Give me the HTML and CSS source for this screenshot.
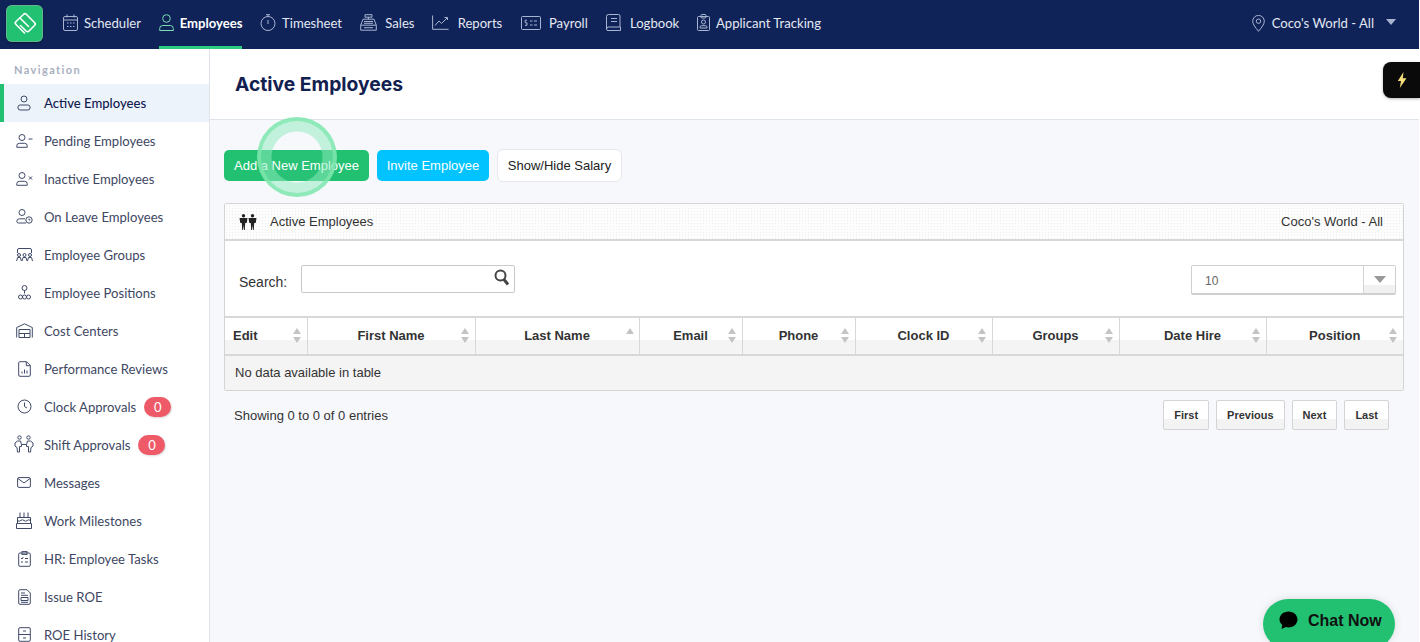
FILE: index.html
```html
<!DOCTYPE html>
<html lang="en">
<head>
<meta charset="utf-8">
<title>Active Employees</title>
<link rel="stylesheet" href="styles.css">
</head>
<body>
<div class="app">
<header class="topbar">
  <a class="logo"><svg viewBox="0 0 26 26" width="26" height="26" fill="none" stroke="#fff" stroke-width="1.6" stroke-linejoin="round" stroke-linecap="round"><path d="M12 3 4 10.500q-1.500 1.500 0 3L12.500 22"/><path d="M12 3q1-1 2 0l8.500 8.500q1.500 1.500 0 3L17 20q-1.500 1.500-3 0l-5.500-5.500"/><path d="M8 7l8.500 8.500"/></svg></a>
  <nav class="topnav">
    <a class="tn"><svg class="ti" width="15" height="17" viewBox="0 0 15 17"><rect x=".5" y="2.5" width="14" height="14" rx="1.5"/><path d="M.5 6h14M4 .5v3M11 .5v3M4 9h1.5M7 9h1.5M10 9h1.5M4 12.500h1.500M7 12.500h1.500M10 12.500h1.500"/></svg>Scheduler</a>
    <a class="tn on"><svg class="ti" width="15" height="17" viewBox="0 0 15 17"><circle cx="7.500" cy="4.500" r="3.800"/><path d="M.7 16.500v-2a3 3 0 0 1 3-3h7.600a3 3 0 0 1 3 3v2z"/></svg>Employees</a>
    <a class="tn"><svg class="ti" width="16" height="17" viewBox="0 0 16 17"><circle cx="8" cy="9.500" r="7"/><path d="M6 .7h4M8 .7v2M8 6v4"/></svg>Timesheet</a>
    <a class="tn wide"><svg class="ti" width="17" height="17" viewBox="0 0 17 17"><path d="M5 .7h7v2.500H5zM8.500 3.200v2M3 5.200h11l2.300 6H.7zM.7 11.200v5h15.600v-5"/><path d="M4 7.500h9M4 9.300h9M4 13.700h9"/></svg>Sales</a>
    <a class="tn wide"><svg class="ti" width="17" height="15" viewBox="0 0 17 15"><path d="M.6 .5v13.800h16"/><path d="M3 10.500 7 6l2.500 2.500L15 3M12.500 2.500H15.500V5"/></svg>Reports</a>
    <a class="tn pay"><svg class="ti" width="20" height="14" viewBox="0 0 20 14"><rect x=".5" y=".5" width="19" height="13" rx="1"/><path d="M9 5h2.500M13 5h3M9 9h2.500M13 9h3M6 4.200H4.200v2.600h1.800v2.500H4"/></svg>Payroll</a>
    <a class="tn wide log"><svg class="ti" width="15" height="17" viewBox="0 0 15 17"><path d="M2.500.5h10a1.500 1.500 0 0 1 1.500 1.500v11H2.500a2 2 0 0 0-2 2V2.500a2 2 0 0 1 2-2z"/><path d="M.5 15a1.500 1.500 0 0 0 1.500 1.500h12.500V13M5 4.500h6M5 7.500h6"/></svg>Logbook</a>
    <a class="tn"><svg class="ti" width="13" height="17" viewBox="0 0 13 17"><rect x=".5" y="2.500" width="12" height="14" rx="1"/><rect x="4" y=".5" width="5" height="3.500" rx="1"/><circle cx="6.500" cy="8" r="2"/><path d="M3 14v-.8a1.500 1.500 0 0 1 1.500-1.500h4a1.500 1.500 0 0 1 1.500 1.500v.8z"/></svg>Applicant Tracking</a>
  </nav>
  <a class="loc"><svg class="ti" width="13" height="17" viewBox="0 0 13 17"><path d="M6.500 16.300C3.500 12.500.7 9.500.7 6.200a5.800 5.800 0 0 1 11.600 0c0 3.300-2.800 6.300-5.800 10.100z"/><circle cx="6.500" cy="6.200" r="2.200"/></svg><span class="loc-text">Coco's World - All</span><span class="caret"></span></a>
</header>

<div class="body">
<aside class="side">
  <div class="side-title">Navigation</div>
  <a class="si on"><span class="sic"><svg class="ic" width="14" height="16" viewBox="0 0 14 16"><circle cx="7" cy="4" r="3"/><rect x="1" y="10" width="12" height="5" rx="2"/></svg></span>Active Employees</a>
  <a class="si"><span class="sic"><svg class="ic" width="17" height="14" viewBox="0 0 17 14"><circle cx="6" cy="3.500" r="3"/><path d="M.8 13.300v-1.500a2.500 2.500 0 0 1 2.500-2.500h5.400a2.500 2.500 0 0 1 2.500 2.500v1.500zM12.500 5h4"/></svg></span>Pending Employees</a>
  <a class="si"><span class="sic"><svg class="ic" width="17" height="14" viewBox="0 0 17 14"><circle cx="6" cy="3.500" r="3"/><path d="M.8 13.300v-1.500a2.500 2.500 0 0 1 2.500-2.500h5.400a2.500 2.500 0 0 1 2.500 2.500v1.500zM13 4.500l3 3M16 4.500l-3 3"/></svg></span>Inactive Employees</a>
  <a class="si"><span class="sic"><svg class="ic" width="17" height="15" viewBox="0 0 17 15"><circle cx="6" cy="3.500" r="3"/><path d="M10 14H2.500A1.700 1.700 0 0 1 .8 12.300v0a2.500 2.500 0 0 1 2.500-2.500H9"/><circle cx="13" cy="11" r="3.200"/><path d="M13 9.500V11h1.300"/></svg></span>On Leave Employees</a>
  <a class="si"><span class="sic"><svg class="ic" width="17" height="14" viewBox="0 0 17 14"><path d="M1.500 5V2a1.500 1.500 0 0 1 1.500-1.500h11A1.500 1.500 0 0 1 15.500 2v3"/><circle cx="3" cy="7" r="1.500"/><circle cx="8.500" cy="7" r="1.500"/><circle cx="14" cy="7" r="1.500"/><path d="M.6 13l1-3.500h2.800l1 3.500M6 13l1-3.500h3l1 3.500M11.500 13l1-3.500h3l1 3.500"/></svg></span>Employee Groups</a>
  <a class="si"><span class="sic"><svg class="ic" width="13" height="15" viewBox="0 0 13 15"><circle cx="6.500" cy="3" r="2.500"/><path d="M6.500 5.500v3"/><circle cx="2.500" cy="12" r="2"/><circle cx="6.500" cy="12" r="2"/><circle cx="10.500" cy="12" r="2"/></svg></span>Employee Positions</a>
  <a class="si"><span class="sic"><svg class="ic" width="17" height="15" viewBox="0 0 17 15"><path d="M.7 14.500V4.500L8.500.8l7.800 3.700v10"/><path d="M3 14.500V6.500h11v8zM3 10.500h11M8.500 10.500v4"/></svg></span>Cost Centers</a>
  <a class="si"><span class="sic"><svg class="ic" width="13" height="16" viewBox="0 0 13 16"><path d="M1.500.7H8.500L12.300 4.500V14a1.300 1.300 0 0 1-1.300 1.300H2A1.300 1.300 0 0 1 .7 14V2A1.300 1.300 0 0 1 1.500.7zM8.300.7v4h4M4 12.500v-2M6.500 12.500v-4M9 12.500v-3"/></svg></span>Performance Reviews</a>
  <a class="si"><span class="sic"><svg class="ic" width="15" height="15" viewBox="0 0 15 15"><circle cx="7.500" cy="7.500" r="6.500"/><path d="M7.500 3.500v4l2.500 1.500"/></svg></span>Clock Approvals<span class="badge">0</span></a>
  <a class="si"><span class="sic"><svg class="ic" width="20" height="19" viewBox="0 0 20 19"><circle cx="5.500" cy="2.500" r="1.700"/><circle cx="14.500" cy="2.500" r="1.700"/><path d="M3.500 6h3l1 3.500v2h-2V17H3.500l-.5-4.500L1 11V8zM16.500 6h-3l-1 3.500v2h2V17h2l.5-4.500L19 11V8zM7.500 9.500h5"/></svg></span>Shift Approvals<span class="badge">0</span></a>
  <a class="si"><span class="sic"><svg class="ic" width="14" height="11" viewBox="0 0 14 11"><rect x=".6" y=".6" width="12.800" height="9.800" rx="1.300"/><path d="M1 1.500 7 6l6-4.500"/></svg></span>Messages</a>
  <a class="si"><span class="sic"><svg class="ic" width="16" height="17" viewBox="0 0 16 17"><path d="M4 .5v5M8 .5v5M12 .5v5M1.500 5.500h13v6h-13zM.5 11.500h15v5H.5zM1.500 8.500q1.600 1.500 3.250 0t3.250 0 3.250 0 3.250 0"/></svg></span>Work Milestones</a>
  <a class="si"><span class="sic"><svg class="ic" width="13" height="16" viewBox="0 0 13 16"><rect x=".7" y="2" width="11.600" height="13.300" rx="1.200"/><rect x="4" y=".6" width="5" height="2.800"/><path d="M3 7l1 1 1.300-1.800M7 7.500h3M3 11h2M7 11h3"/></svg></span>HR: Employee Tasks</a>
  <a class="si"><span class="sic"><svg class="ic" width="13" height="16" viewBox="0 0 13 16"><path d="M1.800.7H9L12.300 4v10a1.300 1.300 0 0 1-1.300 1.300H2A1.300 1.300 0 0 1 .7 14V2A1.300 1.300 0 0 1 1.800.7zM3 4h4M3 6.300h7M3 8.500h7v3H3zM3 13.300h7"/></svg></span>Issue ROE</a>
  <a class="si"><span class="sic"><svg class="ic" width="13" height="15" viewBox="0 0 13 15"><rect x=".7" y=".7" width="11.600" height="13.600" rx="1.300"/><path d="M.7 7.500h11.600M5 4h3M5 11h3"/></svg></span>ROE History</a>
</aside>

<main class="main">
  <div class="titlebar"><h1>Active Employees</h1></div>
  <div class="content">
    <div class="actions">
      <button class="btn green">Add a New Employee</button>
      <button class="btn blue">Invite Employee</button>
      <button class="btn white">Show/Hide Salary</button>
    </div>
    <section class="panel">
      <div class="panel-head">
        <span class="ph-left"><svg width="18" height="16" viewBox="0 0 18 16" fill="#222"><circle cx="4.500" cy="1.800" r="1.700"/><circle cx="13.500" cy="1.800" r="1.700"/><path d="M.5 4h8l-.8 5H6.200l-.4 7H5l-.5-5-.5 5h-.8l-.4-7H1.300zM9.500 4h8l-.8 5h-1.500l-.4 7H14l-.5-5-.5 5h-.8l-.4-7h-1.500z"/></svg>Active Employees</span>
        <span>Coco's World - All</span>
      </div>
      <div class="filters">
        <label class="search">Search:<span class="search-box"><svg width="16" height="17" viewBox="0 0 16 17" fill="none" stroke="#444"><circle cx="6.500" cy="6.500" r="5" stroke-width="2"/><path d="M10 10.500l4 5" stroke-width="3"/></svg></span></label>
        <div class="select"><span class="sel-val">10</span><span class="sel-btn"><span class="sel-caret"></span></span></div>
      </div>
      <table class="grid">
        <colgroup><col class="c1"><col class="c2"><col class="c3"><col class="c4"><col class="c5"><col class="c6"><col class="c7"><col class="c8"><col class="c9"></colgroup>
        <thead><tr>
          <th class="left">Edit<i class="sort"></i></th>
          <th>First Name<i class="sort"></i></th>
          <th>Last Name<i class="sort asc"></i></th>
          <th>Email<i class="sort"></i></th>
          <th>Phone<i class="sort"></i></th>
          <th>Clock ID<i class="sort"></i></th>
          <th>Groups<i class="sort"></i></th>
          <th>Date Hire<i class="sort"></i></th>
          <th>Position<i class="sort"></i></th>
        </tr></thead>
        <tbody><tr><td colspan="9">No data available in table</td></tr></tbody>
      </table>
    </section>
    <div class="foot">
      <span>Showing 0 to 0 of 0 entries</span>
      <div class="pager"><a>First</a><a>Previous</a><a>Next</a><a>Last</a></div>
    </div>
  </div>
</main>
</div>
</div>
<div class="ripple"></div>
<div class="bolt"><svg width="10" height="16" viewBox="0 0 10 16"><path d="M6.500 0 .8 9h3.200L2.800 16 9.500 6.300H5.800z" fill="#f6dd7c"/></svg></div>
<a class="chat"><svg width="19" height="19" viewBox="0 0 19 19"><path d="M9.500 0.500c5 0 9 3.600 9 8s-4 8-9 8c-.9 0-1.800-.1-2.600-.4L2.500 18l.8-4C1.500 12.500.5 10.600.5 8.500c0-4.400 4-8 9-8z" fill="#000"/></svg>Chat Now</a>
</body>
</html>
```

FILE: styles.css
```css
* { box-sizing: border-box; }
html, body { margin: 0; height: 642px; overflow: hidden; background: #fff; }
body { font-family: "Liberation Sans", Arial, sans-serif; position: relative; }
a { text-decoration: none; color: inherit; }
.app { width: 1419px; height: 642px; display: flex; flex-direction: column; }

.topbar { height: 49px; background: #0f2359; display: flex; align-items: stretch; padding-left: 6px; font-family: Lato, sans-serif; flex: none; }
.logo { width: 37px; height: 37px; margin-top: 5px; border-radius: 6px; background: #22c172; display: flex; align-items: center; justify-content: center; box-shadow: 0 1px 2px rgba(0,0,0,.4), inset 0 0 0 1px rgba(150,175,165,.55); }
.topnav { display: flex; margin-left: 20px; gap: 17.700px; }
.tn { display: flex; align-items: center; gap: 6px; font-size: 13.100px; color: #e4e8f2; height: 49px; padding-bottom: 1px; border-bottom: 3px solid transparent; }
.tn.wide { gap: 8.500px; }
.tn.pay { gap: 8px; margin-left: 1px; }
.tn.log { margin-left: 1px; }
.tn.on { color: #fff; font-weight: 700; border-bottom-color: #2ecb7f; }
.ti { fill: none; stroke: #a9b4d0; stroke-width: 1; flex: none; }
.tn.on .ti { stroke: #7ddcb4; }
.loc { margin-left: auto; display: flex; align-items: center; color: #e4e8f2; font-size: 13.100px; padding-right: 23px; padding-bottom: 3px; }
.loc-text { margin-left: 7px; }
.caret { width: 0; height: 0; border-left: 5.500px solid transparent; border-right: 5.500px solid transparent; border-top: 6px solid #a9b4d0; margin-left: 12px; margin-top: -3px; }

.body { flex: 1; display: flex; min-height: 0; }
.side { width: 210px; flex: none; background: #fff; border-right: 1px solid #dfe3ea; overflow: hidden; font-family: Lato, sans-serif; }
.side-title { height: 35px; padding: 14px 0 0 14px; font-size: 11px; font-weight: 700; letter-spacing: 1.400px; color: #a9afc0; line-height: 13px; }
.si { height: 38px; display: flex; align-items: center; font-size: 13.100px; color: #3e4763; border-left: 4px solid transparent; padding: 0 0 1px 10px; }
.si.on { background: #edf3fb; border-left-color: #22c172; color: #12204f; font-weight: 500; }
.sic { width: 20px; margin-right: 10px; display: flex; justify-content: center; flex: none; }
.ic { fill: none; stroke: #3f4a68; stroke-width: 1; }
.badge { margin-left: 8px; width: 27px; height: 20px; border-radius: 10px; background: #ee5a67; color: #fff; font-size: 13px; display: flex; align-items: center; justify-content: center; box-shadow: 1px 1px 2px rgba(0,0,0,.15); }

.main { flex: 1; min-width: 0; background: #f6f8fc; }
.titlebar { height: 71px; background: #fff; border-bottom: 1px solid #dfe3ea; padding: 23px 0 0 25px; }
h1 { margin: 0; font-family: Inter, sans-serif; font-size: 19.300px; font-weight: 700; color: #12204f; line-height: 24px; }
.content { padding: 29px 15px 0 14px; }
.actions { display: flex; align-items: center; gap: 8px; height: 33px; margin-bottom: 21px; }
.btn { font: 13px "Liberation Sans", Arial, sans-serif; border: 0; border-radius: 5px; height: 31px; padding: 0; color: #fff; }
.green { width: 145px; background: #22c172; }
.blue { width: 112px; background: #00c3ff; }
.white { width: 125px; height: 33px; background: #fff; color: #222; border: 1px solid #e6e8ec; border-radius: 6px; }

.panel { border: 1px solid #d4d4d4; background: #fff; font-size: 13px; color: #333; border-radius: 2px; }
.panel-head { height: 37px; border-bottom: 2px solid #d8d8d8; display: flex; align-items: center; justify-content: space-between; padding: 0 20px 0 14px; background-color: #fdfdfd; background-image: radial-gradient(#eeeeee 0.6px, transparent 0.7px); background-size: 3px 3px; }
.ph-left { display: flex; align-items: center; gap: 13px; }
.filters { height: 75px; display: flex; justify-content: space-between; padding: 24px 7px 0 14px; }
.search { display: flex; align-items: flex-start; color: #333; line-height: 34px; font-size: 14px; }
.search-box { width: 214px; height: 28px; margin: 0 0 0 14px; border: 1px solid #c9c9c9; border-radius: 2px; background: #fff; display: flex; align-items: center; justify-content: flex-end; padding: 0 4px 3px 0; }
.select { width: 205px; height: 30px; border: 1px solid #cfcfcf; border-bottom-width: 2px; border-radius: 2px; display: flex; }
.sel-val { flex: 1; padding-left: 13px; font-size: 12px; color: #666; line-height: 30px; }
.sel-btn { width: 32px; border-left: 1px solid #d4d4d4; background: linear-gradient(#fff 70%, #f1f1f1 70%); display: flex; align-items: center; justify-content: center; }
.sel-caret { width: 0; height: 0; border-left: 6px solid transparent; border-right: 6px solid transparent; border-top: 7px solid #999; }

.grid { width: 1178px; table-layout: fixed; border-collapse: collapse; font-size: 13px; }
.c1 { width: 82px; } .c2 { width: 168px; } .c3 { width: 164px; } .c4 { width: 103px; } .c5 { width: 113px; }
.c6 { width: 137px; } .c7 { width: 127px; } .c8 { width: 147px; } .c9 { width: 137px; }
th { height: 38px; position: relative; border: 2px solid #d8d8d8; border-width: 2px 1px 2px 1px; color: #333; font-weight: 700; text-align: center; padding: 0 0 2px 0; background: linear-gradient(#fff 61%, #f4f4f4 61%); }
th:first-child { border-left: 0; }
th:last-child { border-right: 0; }
th.left { text-align: left; padding-left: 8px; }
.sort { position: absolute; right: 5px; top: 10px; width: 9px; height: 15px; }
.sort::before, .sort::after { content: ""; position: absolute; left: 0; width: 0; height: 0; border-left: 4.500px solid transparent; border-right: 4.500px solid transparent; }
.sort::before { top: 0; border-bottom: 6px solid #c4c4c4; }
.sort::after { bottom: 0; border-top: 6px solid #c4c4c4; }
.sort.asc { right: 4px; top: 10px; }
.sort.asc::after { display: none; }
td { height: 35px; background: #f4f4f4; padding: 0 0 2px 10px; color: #333; }

.foot { display: flex; justify-content: space-between; align-items: center; height: 48px; padding: 0 15px 0 10px; font-size: 13px; color: #333; }
.pager { display: flex; gap: 7px; }
.pager a { height: 30px; padding: 0 10px; border: 1px solid #d4d4d4; border-radius: 2px; font-size: 11px; font-weight: 700; color: #333; display: flex; align-items: center; background: linear-gradient(#fff 65%, #f3f3f3 65%); }

.ripple { position: absolute; left: 257px; top: 117px; width: 80px; height: 80px; border-radius: 50%; border: 4px solid rgba(125,230,172,.75); background: radial-gradient(circle, rgba(255,255,255,.03) 0 25px, rgba(145,235,190,.52) 26px); }
.bolt { position: absolute; right: 0; top: 62px; width: 37px; height: 36px; background: #0a0a0a; border-radius: 8px 0 0 8px; display: flex; align-items: center; justify-content: center; box-shadow: 0 1px 3px rgba(0,0,0,.3); }
.chat { position: absolute; left: 1263px; top: 599px; width: 132px; height: 50px; border-radius: 25px; background: #22c172; display: flex; align-items: flex-start; padding: 12px 0 0 16px; gap: 10px; font-size: 16px; font-weight: 700; color: #111; line-height: 19px; box-shadow: 0 0 8px rgba(0,0,0,.12); }
```
